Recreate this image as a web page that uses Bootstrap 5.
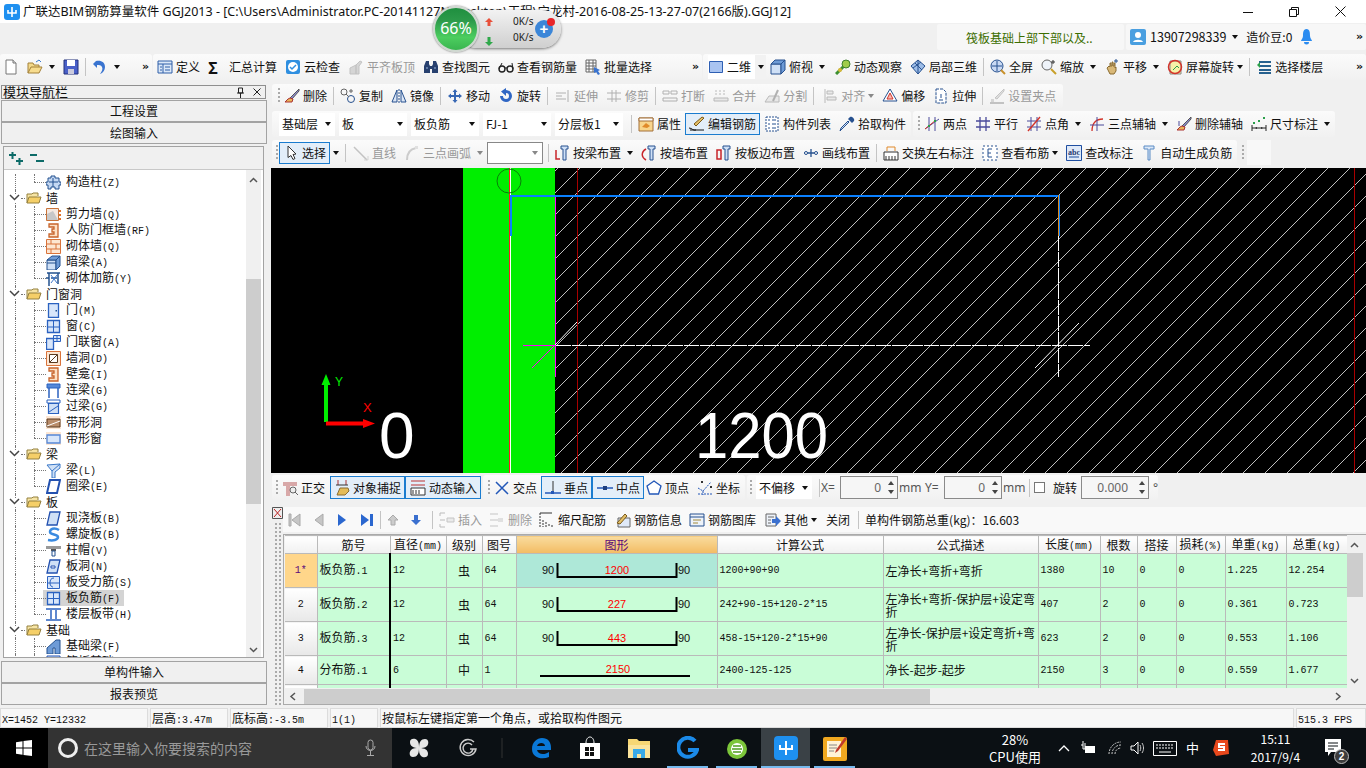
<!DOCTYPE html>
<html lang="zh-CN">
<head>
    <meta charset="UTF-8">
    <meta name="viewport" content="width=device-width, initial-scale=1.0">
    <title>GGJ2013</title>
    <link href="https://cdn.jsdelivr.net/npm/bootstrap@5.3.0/dist/css/bootstrap.min.css" rel="stylesheet">
    <style>
        body { width: 1366px; height: 768px; overflow: hidden; background: #f0f0f0; color: #111; font: 12px/16px "Noto Sans CJK SC", "Liberation Sans", sans-serif; }
        svg { flex: none; display: block; }
        .ltn { font: 10px/16px "Liberation Mono", monospace; }

        .title-bar { height: 23px; background: #fff; padding-left: 4px; }
        .title-text { font: 12.5px/23px "Noto Sans", "Noto Sans CJK SC", sans-serif; margin-left: 3px; white-space: nowrap; }
        .win-btns { margin-left: auto; gap: 36px; padding-right: 20px; }
        .top-band { height: 31px; padding-top: 1px; gap: 2px; justify-content: flex-end; }
        .notice { width: 187px; height: 26px; background: #f7f7f7; color: #3c6e00; padding-left: 29px; line-height: 28px; border-radius: 2px; }
        .user-box { width: 240px; height: 26px; background: #f7f7f7; padding-left: 4px; border-radius: 2px; }
        .phone { font-size: 12.5px; }

        .tbar { display: flex; align-items: center; white-space: nowrap; }
        .seg { height: 100%; display: flex; align-items: center; background: linear-gradient(#fbfbfb, #f1f1f1); border-radius: 3px; }
        .ti { display: inline-flex; align-items: center; gap: 3px; margin-right: 8px; height: 22px; flex: none; }
        .ti.off { color: #999; }
        .ti.off svg { filter: grayscale(1) opacity(.55); }
        .ti.on { background: #e3eef9; outline: 1px solid #1a7ccf; outline-offset: -1px; margin-right: 0; }
        .ti.w10 { margin-right: 10px; }
        .ti.w5 { margin-right: 5px; }
        .ti.l2 { margin-left: 2px; }
        .ic { width: 16px; height: 16px; }
        .car { display: inline-block; width: 0; height: 0; border: 3px solid transparent; border-top: 4px solid #111; border-bottom: 0; margin-left: 6px; flex: none; }
        .ti .car { margin-left: 3px; }
        .ti .car.tight { margin-left: 0; }
        .car.near { margin-left: 3px; }
        .car.dim { border-top-color: #888; }
        .vsep { width: 1px; height: 18px; background: #c4c4c4; margin: 0 6px; flex: none; }
        .vsep.x1 { margin-right: 7px; }
        .vsep.x2 { margin-right: 8px; }
        .vsep.nar { margin: 0 5px; }
        .grip { width: 2px; height: 16px; margin: 0 4px 0 5px; flex: none; background: repeating-linear-gradient(#aaa 0 2px, transparent 2px 4px); }
        .grip.near { margin: 0 1px 0 3px; }
        .grip.near2 { margin: 0 4px; }
        .grip.near3 { margin: 0 4px 0 3px; }
        .chev { font: bold 11px/12px "DejaVu Sans", sans-serif; letter-spacing: -2px; }
        .cmb { display: flex; align-items: center; justify-content: space-between; width: 68px; height: 23px; margin-right: 4px; padding: 0 4px 0 3px; background: #fff; flex: none; }
        .cmb.lay { width: 56px; }
        .cmb.box { width: 56px; height: 22px; border: 1px solid #888; justify-content: flex-end; margin: 0; }
        .cmb.offset { width: 56px; }

        .tb-1 { height: 26px; margin-bottom: 4px; gap: 1px; }
        .seg-a { width: 152px; padding-left: 3px; }
        .seg-b { width: 549px; padding-left: 4px; }
        .seg-c { flex: 1; padding-left: 5px; }
        .seg-end { margin-left: auto; padding-right: 5px; }
        .sq-cmb { background: #fff; height: 24px; padding-right: 4px; margin-right: 4px; }
        .sq-drop { display: flex; align-items: center; justify-content: center; width: 11px; height: 24px; background: #f2f2f2; margin-right: 4px; }
        .sq-drop .car { margin: 0; }

        .main { height: 622px; margin-bottom: 2px; }
        .aside { width: 267px; flex: none; }
        .dock-head { height: 14px; margin: 1px 1px 1px 1px; border: 1px solid #8f8f8f; line-height: 12px; font-size: 13px; padding-left: 1px; }
        .pane-btn { display: block; width: 266px; height: 22px; padding: 0; margin-left: 1px; font-size: 12px; line-height: 20px; border: 1px solid #a3a3a3; border-radius: 0; background: #f0f0f0; color: #111; }
        .tree-box { height: 512px; margin: 2px 3px 3px 3px; border: 1px solid #a3a3a3; background: #fff; }
        .tree-bar { height: 24px; background: #f0f0f0; border-bottom: 1px solid #c8c8c8; padding: 3px 0 0 3px; }
        .tree-list { flex: 1; min-width: 0; overflow: hidden; padding-top: 4px; }
        .tnode { position: relative; height: 16px; display: flex; align-items: center; white-space: nowrap; }
        .tnode::before { content: ""; position: absolute; left: 11px; top: 0; bottom: 0; border-left: 1px dotted #777; }
        .tgroup { padding-left: 5px; }
        .tgroup .ic { position: relative; }
        .tgroup .tarrow { position: relative; background: #fff; }
        .tgroup i { width: 4px; border-bottom: 1px dotted #777; margin: 0 1px; }
        .tgroup > span { margin-left: 4px; }
        .tchild { padding-left: 30px; }
        .tchild::after { content: ""; position: absolute; left: 30px; top: 0; bottom: 0; border-left: 1px dotted #777; }
        .tchild.tlast::after { bottom: 8px; }
        .tchild i { width: 12px; border-bottom: 1px dotted #777; }
        .tchild .ic { width: 15px; height: 15px; position: relative; z-index: 1; }
        .tchild > span { margin-left: 5px; padding-right: 1px; }
        .tnode.sel { background: linear-gradient(90deg, #fff 39px, #d4d4d4 39px, #d4d4d4 120px, #fff 120px); }
        .vscroll { width: 15px; flex: none; background: #f0f0f0; position: relative; }
        .vscroll .thumb { position: absolute; left: 0; right: 0; background: #cdcdcd; }
        .vscroll svg { position: absolute; left: 3px; }
        .tree-scroll { margin: 0 2px 0 0; }
        .tree-scroll .thumb { top: 109px; height: 225px; }
        .up-a { top: 7px; }
        .down-a { bottom: 4px; }

        .work { flex: 1; min-width: 0; padding-left: 4px; }
        .tb-2 { height: 24px; width: 791px; margin-left: 1px; }
        .tb-3 { height: 26px; margin-top: 3px; margin-left: 1px; gap: 2px; }
        .tb-4 { height: 25px; margin-top: 3px; margin-left: 1px; gap: 2px; }
        .seg-2 { width: 100%; padding-left: 1px; }
        .seg-3a { width: 639px; padding-left: 7px; flex: none; }
        .seg-3b { width: 422px; flex: none; }
        .seg-4a { width: 965px; padding-left: 1px; flex: none; }
        .blank-cell { width: 24px; background: #f8f8f8; height: 100%; margin-left: 0; }
        .canvas-area { height: 305px; margin-top: 3px; background: #000; }
        .tb-5 { height: 25px; margin-top: 2px; margin-left: 1px; gap: 2px; }
        .seg-5a { width: 209px; flex: none; }
        .seg-5b { width: 262px; flex: none; }
        .seg-5c { width: 411px; flex: none; }
        .ti.on.snap-on { padding: 0 4px; height: 23px; margin-right: 0; }
        .ti.on.snap-on + .snap-on { padding-left: 5px; }
        .spin { display: flex; align-items: center; justify-content: flex-end; width: 58px; height: 23px; border: 1px solid #8a8a8a; color: #666; font: 12px "Noto Sans", sans-serif; background: #f6f6f6; gap: 7px; padding-right: 3px; flex: none; }
        .spin.wide { width: 68px; }
        .spin b { display: flex; flex-direction: column; gap: 5px; }
        .car.up { border-top: 0; border-bottom: 4px solid #444; margin: 0; }
        .car.down { border-top-color: #444; margin: 0; }
        .gray-t { color: #555; font-family: "Noto Sans", sans-serif; flex: none; }
        .sep-x { margin: 0 1px 0 7px; }
        .lbl-x { margin-right: 3px; width: 16px; }
        .lbl-y { margin-right: 3px; width: 16px; }
        .lbl-m { margin: 0 5px 0 1px; width: 21px; }
        .sep-5 { margin: 0 2px 0 0; }
        .chk { width: 11px; height: 11px; border: 1px solid #777; background: #fff; flex: none; margin: 0 8px 0 2px; }
        .rot-l { margin-right: 4px; }

        .dock { height: 201px; margin-top: 5px; }
        .dock-strip { width: 12px; flex: none; padding: 2px 0 0 1px; }
        .dots { flex: 1; margin: 3px 2px 0; background-image: radial-gradient(#aaa 1px, transparent 1px); background-size: 4px 4px; }
        .dock-body { flex: 1; min-width: 0; }
        .tb-6 { height: 25px; margin-top: 2px; background: #f9f9f9; padding-left: 3px; }
        .tb-6 .ti { margin-right: 7px; }
        .tb-6 .ti.w9 { margin-right: 9px; }
        .tb-6 .ti.w0 { margin-right: 0; }
        .sep-a { margin: 0 4px 0 5px; }
        .sep-c { margin: 0 6px 0 8px; }
        .grid-frame { margin-top: 2px; height: 171px; border: 1px solid #aaa; border-right: 0; background: #f0f0f0; }
        .grid-wrap { height: 153px; overflow: hidden; flex: 1; min-width: 0; }
        .grid-scroll { margin-right: 3px; width: 16px; }
        .grid-scroll .thumb { top: 18px; height: 44px; }
        .rebar { width: 1062px; table-layout: fixed; margin: 0 0 0 1px; --bs-table-bg: #c9fdd7; --bs-table-border-color: #bababa; font-size: 12px; }
        .rebar > * > tr > * { padding: 0 2px; vertical-align: middle; border-width: 0 1px 1px 0; color: #111; }
        .rebar > thead > tr > th { height: 18px; font-weight: 400; text-align: center; background: linear-gradient(#fff, #f0f0f0); line-height: 14px; white-space: nowrap; padding: 0; }
        .rebar > thead > tr > th .ltn { line-height: 12px; }
        .rebar > thead > tr > th.pick { background: linear-gradient(#f9dc9e, #f3bb63); color: #5a0a7a; }
        .rebar > tbody > tr { height: 34px; }
        .rebar > tbody > tr.low { height: 29px; }
        .rebar > tbody > tr > th { background: linear-gradient(#fff, #e8e8e8); text-align: center; font: 10px "Liberation Mono", monospace; }
        .rebar > tbody > tr > th.cur { background: #ffd68a; color: #5a0a7a; }
        .rebar > tbody > tr > td.bar { border-right: 2px solid #000; }
        .rebar > tbody > tr > td.pic { padding: 0; }
        .rebar > tbody > tr > td.pic.cur { background: #aee8d8; }
        .rebar > tbody > tr > td.tight { line-height: 13px; white-space: nowrap; }
        .rebar td.ltn { font: 10px "Liberation Mono", monospace; }
        .rebar td.ctr { text-align: center; }
        .c0 { width: 32px; } .c1 { width: 73px; } .c2 { width: 56px; } .c3 { width: 36px; } .c4 { width: 34px; } .c5 { width: 201px; } .c6 { width: 166px; } .c7 { width: 155px; } .c8 { width: 62px; } .c9 { width: 37px; } .c10 { width: 39px; } .c11 { width: 49px; } .c12 { width: 61px; } .c13 { width: 61px; }
        .hscroll { height: 15px; margin-top: 1px; margin-left: 1px; position: relative; }
        .hscroll .thumb { position: absolute; left: 19px; top: 0; bottom: 0; width: 626px; background: #cdcdcd; }
        .hscroll svg { position: absolute; top: 3px; }

        .status-bar { height: 20px; gap: 2px; }
        .status-bar div { height: 20px; border: 1px solid #dcdcdc; background: #f7f7f7; line-height: 18px; padding-left: 1px; white-space: nowrap; flex: none; }
        .s1 { width: 148px; } .s2 { width: 78px; } .s3 { width: 98px; } .s4 { width: 48px; } .s5 { width: 914px; } .s6 { flex: 1 !important; }

        .task-bar { height: 40px; background: #0b1014; color: #fff; position: relative; }
        .start { width: 48px; height: 40px; background: #000; display: flex; align-items: center; justify-content: center; flex: none; }
        .search { width: 344px; height: 40px; background: #333; display: flex; align-items: center; padding-left: 10px; color: #999; font-size: 14px; margin-right: 2px; flex: none; }
        .search .ring { width: 20px; height: 20px; border: 3px solid #eee; border-radius: 50%; margin-right: 6px; flex: none; }
        .tslot { width: 49px; height: 40px; display: flex; align-items: center; justify-content: center; flex: none; position: relative; }
        .tslot.run::after { content: ""; position: absolute; left: 4px; right: 4px; bottom: 0; height: 2px; background: #76b9ed; }
        .tslot.act { background: #3a4146; }
        .tslot.act::after { left: 0; right: 0; }
        .tsep { width: 24px; height: 40px; display: flex; align-items: center; padding-left: 9px; flex: none; }
        .tray { margin-left: auto; display: flex; align-items: center; height: 40px; padding-right: 25px; }
        .tray-txt { text-align: center; line-height: 17px; font-size: 13px; flex: none; white-space: nowrap; }
        .tray-cpu { width: 52px; margin-right: 17px; }
        .tray-date { width: 53px; font-size: 12px; line-height: 18px; margin-right: 23px; }
        .mr-8 { margin-right: 8px; }
        .mr-9 { margin-right: 9px; }
        .mr-10 { margin-right: 10px; }
        .mr-12 { margin-right: 12px; }
        .mr-14 { margin-right: 14px; }
        .mr-20 { margin-right: 20px; }
        .tray-ime { font-size: 13px; }
        .tray-badge { right: -8px; bottom: -7px; width: 15px; height: 15px; background: #3d3d3d; border: 1px solid #bbb; font: 700 10px/13px "Liberation Sans", sans-serif; }

        .net-wid { position: absolute; left: 433px; top: 6px; width: 128px; height: 46px; }
        .net-pill { position: absolute; left: 24px; top: 4px; right: 0; height: 38px; border-radius: 19px; background: linear-gradient(#f2f2f2, #cfcfcf); box-shadow: 0 1px 3px #777; }
        .net-ball { position: absolute; left: 0; top: 0; width: 46px; height: 46px; border-radius: 50%; background: linear-gradient(#1f8f3f 0, #2c9a4a 30%, #4ccd5f 70%, #39b54f 100%); border: 2px solid #cfd8d0; box-shadow: 0 0 2px #555; color: #fff; text-align: center; font: 16px/40px "Noto Sans", sans-serif; }
        .net-arrows { position: absolute; left: 52px; top: 12px; }
        .net-rate { position: absolute; left: 80px; font: 10px/12px "Noto Sans", sans-serif; color: #222; }
        .rate-up { top: 9px; }
        .rate-down { top: 25px; }
        .net-plus { position: absolute; left: 102px; top: 14px; width: 18px; height: 18px; border-radius: 50%; background: #3b86d8; color: #fff; text-align: center; font: bold 15px/17px "Liberation Sans", sans-serif; }
        .net-dot { position: absolute; left: 114px; top: 12px; width: 8px; height: 8px; border-radius: 50%; background: #e8262a; }
    </style>
</head>
<body class="d-flex flex-column position-relative">

<svg width="0" height="0" class="position-absolute">
    <defs>
        <!-- toolbar icons -->
        <symbol id="new" viewBox="0 0 16 16"><path d="M3 1h7l3 3v11H3z" fill="#fff" stroke="#777"/><path d="M10 1v3h3" fill="#ddd" stroke="#777"/></symbol>
        <symbol id="open" viewBox="0 0 16 16"><path d="M1 14V4h5l1 2h5v2" fill="#f3d98b" stroke="#a3813a"/><path d="M1 14l3-6h11l-3 6z" fill="#f7dc8e" stroke="#a3813a"/><path d="M9 3l3-2 2 2" fill="none" stroke="#3a7bd0"/></symbol>
        <symbol id="save" viewBox="0 0 16 16"><path d="M1 1h14v14H1z" fill="#4a60c8" stroke="#23307a"/><path d="M4 1h8v6H4z" fill="#fff"/><path d="M5 10h6v5H5z" fill="#ccd"/></symbol>
        <symbol id="undo" viewBox="0 0 16 16"><path d="M4 2c5-1 9 1 9 6 0 3-2 6-5 7 2-3 3-5 2-7-1-2-3-2-5-2v3L1 5z" fill="#3a74d0"/></symbol>
        <symbol id="def" viewBox="0 0 16 16"><path d="M1 2h14v12H1z" fill="#dbe8f8" stroke="#2f5fa8"/><path d="M1 5h14M6 5v9M3 8h2M3 11h2M8 8h5M8 11h5" stroke="#2f5fa8" fill="none"/></symbol>
        <symbol id="cloud" viewBox="0 0 16 16"><rect x="1" y="1" width="14" height="14" rx="2" fill="#2f8fe0"/><circle cx="8" cy="8" r="5" fill="#fff"/><path d="M5 8l2 2 4-4" fill="none" stroke="#2f8fe0" stroke-width="1.5"/></symbol>
        <symbol id="flat" viewBox="0 0 16 16"><path d="M2 15V9l6-3v9zM8 15V6l4-4 2 1-3 4v8z" fill="#bbb" stroke="#999"/></symbol>
        <symbol id="find" viewBox="0 0 16 16"><path d="M3 2h3v3l1 2v7H1V7zM10 2h3l2 5v7H9V7l1-2z" fill="#27406f"/><path d="M7 7h2v3H7z" fill="#27406f"/><path d="M3 9h2M11 9h2" stroke="#9cb6dd"/></symbol>
        <symbol id="glass" viewBox="0 0 16 16"><circle cx="4" cy="10" r="3" fill="none" stroke="#222" stroke-width="1.4"/><circle cx="12" cy="10" r="3" fill="none" stroke="#222" stroke-width="1.4"/><path d="M7 9h2M1 10l3-6M15 10l-1-6" stroke="#222" fill="none"/></symbol>
        <symbol id="batch" viewBox="0 0 16 16"><path d="M1 1h10v12H1zM1 4h10M1 7h10M1 10h10M4 1v12M8 1v12" fill="#fff" stroke="#666"/><path d="M9 8l6 3-2 1 2 3-2 1-2-3-2 1z" fill="#3a74d0"/></symbol>
        <symbol id="twod" viewBox="0 0 16 16"><path d="M1.500 2.500h13v11h-13z" fill="#a9c4f1" stroke="#2e5fb3"/></symbol>
        <symbol id="cube" viewBox="0 0 16 16"><path d="M1 5h10v10H1z" fill="#cfe0f6" stroke="#27518f"/><path d="M1 5l4-4h10l-4 4zM11 5l4-4v10l-4 4z" fill="#6e9bd6" stroke="#27518f"/></symbol>
        <symbol id="orbit" viewBox="0 0 16 16"><path d="M1 15L13 3" stroke="#3c8f2e" stroke-width="3"/><circle cx="11" cy="5" r="4" fill="#9fcc4a" stroke="#3c7f2e"/><circle cx="5" cy="11" r="2" fill="#d8b93a"/></symbol>
        <symbol id="local3" viewBox="0 0 16 16"><path d="M8 1l7 6-7 8-7-8z" fill="#9dbde8" stroke="#27518f"/><path d="M5 4l7 7M8 1v14M3 9l8-6" stroke="#27518f" fill="none"/></symbol>
        <symbol id="full" viewBox="0 0 16 16"><circle cx="7" cy="7" r="6" fill="#c9d9f3" stroke="#27518f"/><path d="M7 2v10M2 7h10" stroke="#27518f"/><path d="M11 11l4 4" stroke="#c8902a" stroke-width="2"/></symbol>
        <symbol id="zoom" viewBox="0 0 16 16"><circle cx="6" cy="6" r="5" fill="#eef3fa" stroke="#666"/><path d="M10 10l5 5" stroke="#c8a02a" stroke-width="2"/><path d="M12 1v4M14 3h-4" stroke="#333"/></symbol>
        <symbol id="pan" viewBox="0 0 16 16"><path d="M3 9l2-2 1 1V4h1v3h1V3h1v4h1V4h1v5l1-1v4l-2 3H6z" fill="#d9b877" stroke="#8a6d33"/><path d="M12 0v4M10 2h4" stroke="#27518f"/></symbol>
        <symbol id="srot" viewBox="0 0 16 16"><path d="M3 2h11v13H3z" fill="#f7f1a8" stroke="#888"/><circle cx="8" cy="8" r="6.500" fill="none" stroke="#d2332a" stroke-width="1.500"/><path d="M6 11l4-4 2 2" stroke="#2a9f4a" fill="none"/></symbol>
        <symbol id="floors" viewBox="0 0 16 16"><path d="M3 3h12M3 7h12M3 11h12M3 14h12" stroke="#27618f" stroke-width="2"/><path d="M1 6l3-3v6z" fill="#2a9f4a"/></symbol>
        <symbol id="erase" viewBox="0 0 16 16"><path d="M15 1L6 10l2 1 7-8z" fill="#8a8ad0" stroke="#555"/><path d="M6 10l-2 1-3 3h7l1-3z" fill="#e9b458" stroke="#a33"/></symbol>
        <symbol id="copy" viewBox="0 0 16 16"><circle cx="4" cy="4" r="3" fill="none" stroke="#666"/><circle cx="11" cy="11" r="3.500" fill="none" stroke="#27518f"/><path d="M6 6l3 3M11 1v4M13 3H9" stroke="#666"/></symbol>
        <symbol id="mirror" viewBox="0 0 16 16"><path d="M6 2v12H1zM10 2v12h5z" fill="#dbe6f6" stroke="#27518f"/><path d="M8 1v14" stroke="#27518f" stroke-dasharray="2 1"/></symbol>
        <symbol id="move" viewBox="0 0 16 16"><path d="M8 1l2.500 3H9v3h3V5.500l3 2.500-3 2.500V9H9v3h1.500L8 15l-2.500-3H7V9H4v1.500L1 8l3-2.500V7h3V4H5.500z" fill="#3868b4"/></symbol>
        <symbol id="rot" viewBox="0 0 16 16"><path d="M8 2a6 6 0 1 1-6 6h3a3 3 0 1 0 3-3v3L3 3.500 8 0z" fill="#2f66c4"/></symbol>
        <symbol id="extd" viewBox="0 0 16 16"><path d="M1 5h10M1 11h10M1 8h6M13 2v12" stroke="#777" fill="none"/></symbol>
        <symbol id="trim" viewBox="0 0 16 16"><path d="M6 2v12M10 2v12M1 5h14M1 11h14" stroke="#777" fill="none"/></symbol>
        <symbol id="brk" viewBox="0 0 16 16"><path d="M1 3h6v3H1zM9 3h6v3H9zM1 10h14v3H1z" fill="none" stroke="#777"/></symbol>
        <symbol id="merge" viewBox="0 0 16 16"><path d="M1 10h14v3H1z" fill="#ddd" stroke="#888"/><path d="M3 2v6M7 2v6M11 2v6" stroke="#888" stroke-dasharray="2 1"/></symbol>
        <symbol id="split" viewBox="0 0 16 16"><path d="M1 14l4-6h10v6z" fill="#ddd" stroke="#888"/><path d="M9 13l5-11" stroke="#777" stroke-width="2"/></symbol>
        <symbol id="align" viewBox="0 0 16 16"><path d="M3 1v14M5 3h6v3H5zM5 9h9v3H5z" fill="#ddd" stroke="#888"/></symbol>
        <symbol id="off" viewBox="0 0 16 16"><path d="M8 1l7 12H1z" fill="#fff" stroke="#27518f"/><path d="M8 5l3 6H5z" fill="#f6b9b0" stroke="#d2332a"/></symbol>
        <symbol id="strch" viewBox="0 0 16 16"><path d="M3 1h7l3 3v11H3z" fill="#fff" stroke="#27518f" stroke-dasharray="3 1"/><path d="M6 12h4M8 6v4" stroke="#27518f"/></symbol>
        <symbol id="grip" viewBox="0 0 16 16"><path d="M15 1L6 10l2 1 7-8z" fill="#ccc" stroke="#999"/><path d="M1 15h14" stroke="#999" stroke-width="2"/><path d="M2 11h3v3H2z" fill="#bbb"/></symbol>
        <symbol id="attr" viewBox="0 0 16 16"><path d="M1 2h14v13H1z" fill="#f8d58c" stroke="#a3713a"/><path d="M1 2h14v3H1z" fill="#fff" stroke="#a3713a"/><path d="M4 11l4-4 4 3-3 2z" fill="#e08a2a"/></symbol>
        <symbol id="edit" viewBox="0 0 16 16"><path d="M15 2l-8 8-2-2 8-7z" fill="#e4c069" stroke="#7a5a1a"/><path d="M0 12c3 0 4 3 7 2M1 14h14" stroke="#111" fill="none"/></symbol>
        <symbol id="list" viewBox="0 0 16 16"><path d="M2 1h12v14H2z" fill="#fff" stroke="#27518f" stroke-dasharray="2 1"/><path d="M4 4h2M4 8h2M4 12h2M8 4h4M8 8h4M8 12h4" stroke="#27518f"/></symbol>
        <symbol id="pick" viewBox="0 0 16 16"><path d="M10 6l-7 7-2 2 1-3 7-7z" fill="#cfe0f6" stroke="#27518f"/><path d="M9 3l4 4 2-2c1-2-2-5-4-4z" fill="#27518f"/></symbol>
        <symbol id="twop" viewBox="0 0 16 16"><path d="M1 13L15 3M5 1v14M11 1v14" stroke="#4a4a9a" fill="none"/><path d="M1 13L12 4" stroke="#d2332a"/><rect x="4" y="9" width="2" height="2" fill="#2a9f4a"/><rect x="10" y="4" width="2" height="2" fill="#2a9f4a"/></symbol>
        <symbol id="para" viewBox="0 0 16 16"><path d="M5 1v14M11 1v14M1 5h14M1 11h14" stroke="#4a4a9a" stroke-width="1.300"/></symbol>
        <symbol id="angl" viewBox="0 0 16 16"><path d="M5 1v14M11 1v14M1 5h14M1 11h14" stroke="#4a4a9a"/><path d="M2 15L14 1" stroke="#d2332a" stroke-width="1.400"/></symbol>
        <symbol id="arc3" viewBox="0 0 16 16"><path d="M3 15C3 7 7 3 14 3" stroke="#d2332a" fill="none" stroke-width="1.300"/><path d="M8 1v14M1 9h14" stroke="#4a4a9a"/></symbol>
        <symbol id="delx" viewBox="0 0 16 16"><path d="M15 1L6 10l2 1 7-8z" fill="#8a8ad0" stroke="#555"/><path d="M6 10l-2 1-3 3h7l1-3z" fill="#e9b458" stroke="#a33"/><path d="M3 5v5" stroke="#4a4a9a"/></symbol>
        <symbol id="dim" viewBox="0 0 16 16"><path d="M1 9v6M15 9v6M1 12h14" stroke="#222"/><path d="M2 6h2v2H2zM12 1h2v2h-2zM7 4h2v2H7z" fill="#2a9f4a"/><path d="M4 12l2-1v2zM12 12l-2-1v2z" fill="#222"/></symbol>
        <symbol id="cursor" viewBox="0 0 16 16"><path d="M5 1l8 8-3 .5 2 4-2 1-2-4-3 2z" fill="#fff" stroke="#333"/></symbol>
        <symbol id="line" viewBox="0 0 16 16"><path d="M1 2l13 13" stroke="#999" stroke-width="1.500"/><path d="M11 15h4v-4" stroke="#bbb" fill="none"/></symbol>
        <symbol id="arc" viewBox="0 0 16 16"><path d="M3 15C3 8 6 4 12 3" stroke="#aaa" fill="none" stroke-width="2"/><rect x="11" y="1" width="3" height="3" fill="#ccc"/></symbol>
        <symbol id="blay" viewBox="0 0 16 16"><path d="M7 1h7v3h-2v11H9V4H7z" fill="#cfe0f6" stroke="#27518f"/><path d="M2 5v9h4" stroke="#c8242a" fill="none" stroke-width="1.500"/></symbol>
        <symbol id="wlay" viewBox="0 0 16 16"><path d="M7 1h7v3h-2v11H9V4H7z" fill="#cfe0f6" stroke="#27518f"/><path d="M5 4C0 7 0 12 5 15" stroke="#c8242a" fill="none" stroke-width="1.500"/></symbol>
        <symbol id="elay" viewBox="0 0 16 16"><path d="M7 1h7v3h-2v11H9V4H7z" fill="#cfe0f6" stroke="#27518f"/><path d="M1 5h4v9H1z" fill="none" stroke="#c8242a" stroke-width="1.500"/></symbol>
        <symbol id="llay" viewBox="0 0 16 16"><path d="M1 8h14M8 4v8" stroke="#27518f" stroke-width="1.300"/><circle cx="3" cy="8" r="1.500" fill="#fff" stroke="#27518f"/><circle cx="13" cy="8" r="1.500" fill="#fff" stroke="#27518f"/></symbol>
        <symbol id="swap" viewBox="0 0 16 16"><path d="M1 7h14v8H1z" fill="#fff" stroke="#333"/><path d="M3 11v4M6 11v4M9 11v4M12 11v4" stroke="#333"/><path d="M4 2v4M12 2v4M4 2h8" stroke="#e0892a"/></symbol>
        <symbol id="view" viewBox="0 0 16 16"><path d="M1 1h14v14H1z" fill="#fff" stroke="#27518f" stroke-dasharray="2 2"/><path d="M10 4H6v8h4M6 8h3" stroke="#27518f" fill="none"/></symbol>
        <symbol id="abc" viewBox="0 0 16 16"><path d="M.500.500h15v15h-15z" fill="#dfe9f8" stroke="#1f4ea0"/><path d="M3 12h10" stroke="#1f4ea0"/><text x="8" y="10" font-size="8" font-weight="700" text-anchor="middle" fill="#1f3a70" font-family="Liberation Serif">abc</text></symbol>
        <symbol id="auto" viewBox="0 0 16 16"><path d="M3 1h10v3H9v11H7V4H3z" fill="#dbe8f8" stroke="#5a8bc4"/></symbol>
        <symbol id="orth" viewBox="0 0 16 16"><path d="M1 2h14v4H1zM4 6h4v10H4z" fill="#d8a8a8"/><circle cx="11" cy="10" r="3" fill="#eee" stroke="#666"/><path d="M13 12l3 3" stroke="#666"/></symbol>
        <symbol id="snap" viewBox="0 0 16 16"><path d="M4 0v5M12 0v5" stroke="#a33"/><path d="M2 5h12" stroke="#333"/><path d="M3 15l3-7h8l1 3-4 4z" fill="#e5bc58" stroke="#8a6d33"/></symbol>
        <symbol id="dyn" viewBox="0 0 16 16"><path d="M1 1h14M1 5h14" stroke="#b33"/><path d="M1 8h14v7H1z" fill="#fff" stroke="#333"/><path d="M3 14V10M6 14V10M9 14V10" stroke="#333"/></symbol>
        <symbol id="cross" viewBox="0 0 16 16"><path d="M2 2l12 12M14 2L2 14" stroke="#2257b8" stroke-width="1.500"/></symbol>
        <symbol id="perp" viewBox="0 0 16 16"><path d="M0 13h16" stroke="#2257b8" stroke-width="1.500"/><path d="M8 1v12" stroke="#333"/><rect x="6" y="11" width="3" height="3" fill="#2257b8"/></symbol>
        <symbol id="mid" viewBox="0 0 16 16"><path d="M0 8h16" stroke="#2257b8" stroke-width="1.500"/><rect x="6" y="6" width="4" height="4" fill="#1d3f80"/></symbol>
        <symbol id="vtx" viewBox="0 0 16 16"><path d="M8 1l7 5-2.500 8h-9L1 6z" fill="#fff" stroke="#2257b8" stroke-width="1.300"/></symbol>
        <symbol id="coord" viewBox="0 0 16 16"><path d="M1 8l5 3 8-9M6 11v4M1 14h14" stroke="#2257b8" fill="none" stroke-dasharray="2 1"/><rect x="4" y="1" width="2" height="2" fill="#333"/><rect x="13" y="6" width="2" height="2" fill="#333"/></symbol>
        <symbol id="first" viewBox="0 0 16 16"><path d="M3 2h2v12H3zM14 2v12L6 8z" fill="#c6c6c6" stroke="#aaa"/></symbol>
        <symbol id="prev" viewBox="0 0 16 16"><path d="M12 2v12L4 8z" fill="#c6c6c6" stroke="#aaa"/></symbol>
        <symbol id="next" viewBox="0 0 16 16"><path d="M4 2v12l8-6z" fill="#2b67cf"/></symbol>
        <symbol id="last" viewBox="0 0 16 16"><path d="M2 2v12l8-6zM11 2h3v12h-3z" fill="#2b67cf"/></symbol>
        <symbol id="upb" viewBox="0 0 16 16"><path d="M8 3l5 5h-3v5H6V8H3z" fill="#ccc" stroke="#aaa"/></symbol>
        <symbol id="dnb" viewBox="0 0 16 16"><path d="M8 13l5-5h-3V3H6v5H3z" fill="#3b70cf"/></symbol>
        <symbol id="ins" viewBox="0 0 16 16"><path d="M1 1h5M1 8h5M1 15h5M1 1v3M1 12v3" stroke="#888" fill="none"/><path d="M8 6h7v4H8z" fill="#ddd" stroke="#999"/></symbol>
        <symbol id="dele" viewBox="0 0 16 16"><path d="M1 2h8M1 8h8M1 14h8" stroke="#999" fill="none"/><path d="M9 6h5v4H9z" fill="#ccc"/></symbol>
        <symbol id="scale" viewBox="0 0 16 16"><path d="M1 1v14M4 8v7M7 10v5M10 12v3M13 13v2" stroke="#333" stroke-dasharray="2 1"/><path d="M1 1h12" stroke="#333"/></symbol>
        <symbol id="info" viewBox="0 0 16 16"><path d="M3 6h12v9H3z" fill="#dfe9f8" stroke="#666"/><path d="M2 11l8-9 2 2-7 8z" fill="#e4c069" stroke="#7a5a1a"/></symbol>
        <symbol id="lib" viewBox="0 0 16 16"><path d="M1 2h14v12H1z" fill="#eef3fa" stroke="#27518f"/><path d="M1 5h14" stroke="#27518f"/><path d="M4 8h8M4 11h5" stroke="#a38a3a"/></symbol>
        <symbol id="other" viewBox="0 0 16 16"><path d="M1 2h10v12H1z" fill="#eef3fa" stroke="#666"/><path d="M3 5h6M3 8h3M3 11h3" stroke="#666"/><path d="M7 7h4V4l5 5-5 5v-3H7z" fill="#3b70cf"/></symbol>
        <symbol id="panel-x" viewBox="0 0 11 12"><path d="M.500.500h10v11H.500z" fill="#eee" stroke="#555"/><path d="M2 2l7 8M9 2l-7 8" stroke="#b22"/></symbol>
        <symbol id="folder" viewBox="0 0 16 16"><path d="M1 13V4h5l1-1h5v3" fill="#f6e4a4" stroke="#94803f"/><path d="M1 13l2-6h12l-2 6z" fill="#f5cf68" stroke="#94803f"/></symbol>
        <!-- tree icons -->
        <symbol id="t-col" viewBox="0 0 15 15"><path d="M5 1h4v2h4v4h2v3h-2v4H9v-2H5v2H2v-4H0V7h2V3h3z" fill="#c4d8f3" stroke="#23518f"/><path d="M7 3v9M3 7h9" stroke="#23518f"/></symbol>
        <symbol id="t-shear" viewBox="0 0 15 15"><path d="M.500 1.500h12v12h-12z" fill="#f4e8e0" stroke="#c8733a"/><path d="M1 7l6-3 5 9H1z" fill="#c7c7c7"/><path d="M14 3v2M14 7v2M14 11v2" stroke="#e0722a" stroke-width="2"/></symbol>
        <symbol id="t-frame" viewBox="0 0 15 15"><path d="M3 1h9v13H3v-3h5V9H6V6h2V4H3z" fill="#fde0c5" stroke="#c8632a" stroke-width="1.300"/></symbol>
        <symbol id="t-brick" viewBox="0 0 15 15"><path d="M.500.500h14v14H.500z" fill="#fde6d2" stroke="#d9733a"/><path d="M0 5h15M0 10h15M5 0v5M10 5v5M5 10v5" stroke="#d9733a"/></symbol>
        <symbol id="t-hbeam" viewBox="0 0 15 15"><path d="M1 5h9v10H1z" fill="#cfe0f6" stroke="#23518f"/><path d="M1 5l5-4h8l-4 4zM10 5l4-4v10l-4 4z" fill="#6e9bd6" stroke="#23518f"/><path d="M1 8h9" stroke="#23518f"/></symbol>
        <symbol id="t-mrebar" viewBox="0 0 15 15"><path d="M1 2h13M3 2v13M12 2v11M5 7h6M0 7h3" stroke="#23518f" stroke-width="1.500" fill="none"/><path d="M5 4l6 8M11 4l-6 8" stroke="#3f77cc"/></symbol>
        <symbol id="t-door" viewBox="0 0 15 15"><path d="M2.500.500h10v14h-10z" fill="#d8e6fa" stroke="#2b62c0" stroke-width="1.300"/><rect x="9.500" y="7" width="1.500" height="1.500" fill="#23518f"/></symbol>
        <symbol id="t-win" viewBox="0 0 15 15"><path d="M1.500 1.500h12v12h-12z" fill="#d8e6fa" stroke="#2b62c0" stroke-width="1.300"/><path d="M7.500 1v13M1 8h13" stroke="#2b62c0"/></symbol>
        <symbol id="t-dw" viewBox="0 0 15 15"><path d="M.500 3.500h7v11h-7z" fill="#d8e6fa" stroke="#2b62c0" stroke-width="1.300"/><path d="M7.500 .500h7v6h-7zM11 1v6M8 3.500h6" fill="#d8e6fa" stroke="#2b62c0"/></symbol>
        <symbol id="t-whole" viewBox="0 0 15 15"><path d="M.500.500h14v14H.500z" fill="#fde6d2" stroke="#d9733a"/><path d="M3.500 3.500h8v8h-8z" fill="#fff" stroke="#5b3a20"/><path d="M3.500 11.500l8-8" stroke="#5b3a20"/></symbol>
        <symbol id="t-link" viewBox="0 0 15 15"><path d="M1 1h13v4H1z" fill="#5588d8" stroke="#2b62c0"/><path d="M3 5v10M12 5v10" stroke="#2b62c0" stroke-width="1.500"/></symbol>
        <symbol id="t-lint" viewBox="0 0 15 15"><path d="M1 1h13v3H1z" fill="#fff" stroke="#2b62c0"/><path d="M2.500 4.500h10v10h-10z" fill="#cfe0f6" stroke="#2b62c0" stroke-width="1.200"/><path d="M3 13l9-6" stroke="#2b62c0"/></symbol>
        <symbol id="t-bhole" viewBox="0 0 15 15"><path d="M0 1h15v13H0z" fill="#fde6d2"/><path d="M1 4h13v8H1z" fill="#b98d6b" stroke="#5b3a20"/><path d="M1 11l13-5" stroke="#fff"/></symbol>
        <symbol id="t-bwin" viewBox="0 0 15 15"><path d="M0 1h15v13H0z" fill="#fde6d2"/><path d="M1 4h13v8H1z" fill="#d8e6fa" stroke="#5588d8" stroke-width="1.300"/></symbol>
        <symbol id="t-beam" viewBox="0 0 15 15"><path d="M1 2l13-1v4L9 9v6H6V8z" fill="#cfe0f6" stroke="#3a78c8"/><path d="M6 8l8-7" stroke="#3a78c8"/></symbol>
        <symbol id="t-ring" viewBox="0 0 15 15"><path d="M4 1h10l-3 13H1z" fill="#fff" stroke="#2351b0" stroke-width="2"/></symbol>
        <symbol id="t-slab" viewBox="0 0 15 15"><path d="M4 1h10l-3 13H1z" fill="#cfe0f6" stroke="#2351b0" stroke-width="1.300"/></symbol>
        <symbol id="t-spiral" viewBox="0 0 15 15"><path d="M13 3C8 0 4 2 4 5s8 2 8 5-5 4-10 3" fill="none" stroke="#3a8ae0" stroke-width="2.500"/></symbol>
        <symbol id="t-cap" viewBox="0 0 15 15"><path d="M0 3h15v3H0z" fill="#999"/><path d="M5 6h5v2H5z" fill="#555"/><path d="M6 8h3v5H6z" fill="#fff" stroke="#23518f"/></symbol>
        <symbol id="t-shole" viewBox="0 0 15 15"><path d="M4 1h10l-3 13H1z" fill="#cfe0f6" stroke="#2351b0" stroke-width="1.300"/><path d="M5 7h4v2H5z" fill="#fff" stroke="#2351b0"/></symbol>
        <symbol id="t-srebar" viewBox="0 0 15 15"><path d="M1.500 1.500h12v12h-12z" fill="#d8e6fa" stroke="#2b62c0"/><path d="M1 8h13M8 3C5 3 4 5 4 8s2 4 3 4" stroke="#2b62c0" fill="none"/></symbol>
        <symbol id="t-neg" viewBox="0 0 15 15"><path d="M1.500 1.500h12v12h-12z" fill="#d8e6fa" stroke="#2b62c0" stroke-width="1.300"/><path d="M7.500 2v11M2 7.500h11" stroke="#2b62c0"/></symbol>
        <symbol id="t-band" viewBox="0 0 15 15"><path d="M0 2h15M0 13h15M5 3v9M10 3v9" stroke="#2b62c0" stroke-width="1.500"/></symbol>
        <symbol id="t-fbeam" viewBox="0 0 15 15"><path d="M1 15V9l9-8h4v14H9V9H7v6z" fill="#6e9bd6" stroke="#23518f"/></symbol>
        <symbol id="t-raft" viewBox="0 0 15 15"><path d="M1 1h13v13H1z" fill="#cfe0f6" stroke="#2351b0"/></symbol>
        <pattern id="hatch" width="22" height="22" patternUnits="userSpaceOnUse"><path d="M-1 23L23-1" stroke="#bdbdbd" shape-rendering="crispEdges"/></pattern>
    </defs>
</svg>

<!-- title bar -->
<header class="title-bar d-flex align-items-center">
    <svg width="16" height="16" viewBox="0 0 16 16"><rect width="16" height="16" rx="3" fill="#1e90f0"/><path d="M8 3v10M4 6v3h8V6" stroke="#fff" stroke-width="1.600" fill="none"/></svg>
    <span class="title-text">广联达BIM钢筋算量软件 GGJ2013 - [C:\Users\Administrator.PC-20141127N\Desktop\工程\宁龙村-2016-08-25-13-27-07(2166版).GGJ12]</span>
    <div class="win-btns d-flex align-items-center">
        <svg width="10" height="10" viewBox="0 0 10 10"><path d="M0 5.500h10" stroke="#111"/></svg>
        <svg width="10" height="10" viewBox="0 0 10 10"><path d="M.500 2.500h7v7h-7zM2.500 2.500v-2h7v7h-2" fill="none" stroke="#111"/></svg>
        <svg width="11" height="11" viewBox="0 0 11 11"><path d="M.500.500l10 10M10.500.500l-10 10" stroke="#111"/></svg>
    </div>
</header>

<!-- ribbon band with news and user -->
<div class="top-band d-flex">
    <div class="notice">筏板基础上部下部以及..</div>
    <div class="user-box d-flex align-items-center">
        <svg width="16" height="18" viewBox="0 0 16 18"><rect y="1" width="16" height="16" rx="2" fill="#4a9fe0"/><circle cx="8" cy="7" r="3" fill="#fff"/><path d="M3 14c1-3 9-3 10 0z" fill="#fff"/></svg>
        <span class="ms-1 phone">13907298339</span><b class="car"></b>
        <span class="ms-2">造价豆:0</span>
        <svg class="ms-2" width="13" height="18" viewBox="0 0 13 18"><path d="M6.500 1C3 1 3 5 3 8c0 2-2 4-2 5h11c0-1-2-3-2-5 0-3 0-7-3.500-7z" fill="#2c8cf0"/><path d="M4 14a2.500 2.500 0 0 0 5 0z" fill="#2c8cf0"/></svg>
        <span class="chev seg-end">»</span>
    </div>
</div>

<!-- main toolbar -->
<div class="tbar tb-1">
    <div class="seg seg-a">
        <svg class="ic me-2"><use href="#new"/></svg>
        <svg class="ic"><use href="#open"/></svg><b class="car me-2"></b>
        <svg class="ic"><use href="#save"/></svg>
        <span class="vsep"></span>
        <svg class="ic"><use href="#undo"/></svg><b class="car"></b>
        <span class="chev seg-end">»</span>
    </div>
    <div class="seg seg-b">
        <span class="ti"><svg class="ic"><use href="#def"/></svg>定义</span>
        <span class="ti"><b class="fs-6 me-1">Σ</b><span class="ms-1">汇总计算</span></span>
        <span class="ti"><svg class="ic"><use href="#cloud"/></svg>云检查</span>
        <span class="ti off"><svg class="ic"><use href="#flat"/></svg>平齐板顶</span>
        <span class="ti"><svg class="ic"><use href="#find"/></svg>查找图元</span>
        <span class="ti"><svg class="ic"><use href="#glass"/></svg>查看钢筋量</span>
        <span class="ti"><svg class="ic"><use href="#batch"/></svg>批量选择</span>
        <span class="chev seg-end">»</span>
    </div>
    <div class="seg seg-c">
        <span class="ti sq-cmb m-0"><svg class="ic"><use href="#twod"/></svg>二维</span><span class="sq-drop"><b class="car"></b></span>
        <span class="ti w10"><svg class="ic"><use href="#cube"/></svg>俯视<b class="car"></b></span>
        <span class="ti"><svg class="ic"><use href="#orbit"/></svg>动态观察</span>
        <span class="ti m-0"><svg class="ic"><use href="#local3"/></svg>局部三维</span>
        <span class="vsep"></span>
        <span class="ti"><svg class="ic"><use href="#full"/></svg>全屏</span>
        <span class="ti"><svg class="ic"><use href="#zoom"/></svg>缩放<b class="car"></b></span>
        <span class="ti"><svg class="ic"><use href="#pan"/></svg>平移<b class="car"></b></span>
        <span class="ti m-0"><svg class="ic"><use href="#srot"/></svg>屏幕旋转<b class="car tight"></b></span>
        <span class="vsep"></span>
        <span class="ti"><svg class="ic"><use href="#floors"/></svg>选择楼层</span>
        <span class="chev seg-end">»</span>
    </div>
</div>

<div class="main d-flex">
    <!-- module navigator -->
    <aside class="aside d-flex flex-column">
        <div class="dock-head d-flex align-items-center">
            <span>模块导航栏</span>
            <svg class="ms-auto me-2" width="9" height="11" viewBox="0 0 9 11"><path d="M2.500 1h4v5h-4zM1 6h7M4.500 6v5" fill="none" stroke="#222"/></svg>
            <svg class="me-1" width="8" height="8" viewBox="0 0 8 8"><path d="M.500.500l7 7M7.500.500l-7 7" stroke="#222"/></svg>
        </div>
        <button class="btn pane-btn">工程设置</button>
        <button class="btn pane-btn">绘图输入</button>
        <div class="tree-box d-flex flex-column">
            <div class="tree-bar d-flex gap-1">
                <svg width="18" height="16" viewBox="0 0 18 16"><path d="M2 5h7M5.500 2v7M9 11h7M12.500 8v7" stroke="#0d6b68" stroke-width="2"/></svg>
                <svg width="16" height="16" viewBox="0 0 16 16"><path d="M1 5h7M7 11h8" stroke="#0d6b68" stroke-width="2"/></svg>
            </div>
            <div class="d-flex flex-grow-1 overflow-hidden">
                <div class="tree-list">
                    <div class="tnode tchild tlast"><i></i><svg class="ic"><use href="#t-col"/></svg><span>构造柱<span class="ltn">(Z)</span></span></div>
                    <div class="tnode tgroup"><svg class="tarrow" width="11" height="8" viewBox="0 0 11 8"><path d="M1 1l4.500 4.500L10 1" fill="none" stroke="#444" stroke-width="1.500"/></svg><i></i><svg class="ic"><use href="#folder"/></svg><span>墙</span></div>
                    <div class="tnode tchild"><i></i><svg class="ic"><use href="#t-shear"/></svg><span>剪力墙<span class="ltn">(Q)</span></span></div>
                    <div class="tnode tchild"><i></i><svg class="ic"><use href="#t-frame"/></svg><span>人防门框墙<span class="ltn">(RF)</span></span></div>
                    <div class="tnode tchild"><i></i><svg class="ic"><use href="#t-brick"/></svg><span>砌体墙<span class="ltn">(Q)</span></span></div>
                    <div class="tnode tchild"><i></i><svg class="ic"><use href="#t-hbeam"/></svg><span>暗梁<span class="ltn">(A)</span></span></div>
                    <div class="tnode tchild tlast"><i></i><svg class="ic"><use href="#t-mrebar"/></svg><span>砌体加筋<span class="ltn">(Y)</span></span></div>
                    <div class="tnode tgroup"><svg class="tarrow" width="11" height="8" viewBox="0 0 11 8"><path d="M1 1l4.500 4.500L10 1" fill="none" stroke="#444" stroke-width="1.500"/></svg><i></i><svg class="ic"><use href="#folder"/></svg><span>门窗洞</span></div>
                    <div class="tnode tchild"><i></i><svg class="ic"><use href="#t-door"/></svg><span>门<span class="ltn">(M)</span></span></div>
                    <div class="tnode tchild"><i></i><svg class="ic"><use href="#t-win"/></svg><span>窗<span class="ltn">(C)</span></span></div>
                    <div class="tnode tchild"><i></i><svg class="ic"><use href="#t-dw"/></svg><span>门联窗<span class="ltn">(A)</span></span></div>
                    <div class="tnode tchild"><i></i><svg class="ic"><use href="#t-whole"/></svg><span>墙洞<span class="ltn">(D)</span></span></div>
                    <div class="tnode tchild"><i></i><svg class="ic"><use href="#t-frame"/></svg><span>壁龛<span class="ltn">(I)</span></span></div>
                    <div class="tnode tchild"><i></i><svg class="ic"><use href="#t-link"/></svg><span>连梁<span class="ltn">(G)</span></span></div>
                    <div class="tnode tchild"><i></i><svg class="ic"><use href="#t-lint"/></svg><span>过梁<span class="ltn">(G)</span></span></div>
                    <div class="tnode tchild"><i></i><svg class="ic"><use href="#t-bhole"/></svg><span>带形洞</span></div>
                    <div class="tnode tchild tlast"><i></i><svg class="ic"><use href="#t-bwin"/></svg><span>带形窗</span></div>
                    <div class="tnode tgroup"><svg class="tarrow" width="11" height="8" viewBox="0 0 11 8"><path d="M1 1l4.500 4.500L10 1" fill="none" stroke="#444" stroke-width="1.500"/></svg><i></i><svg class="ic"><use href="#folder"/></svg><span>梁</span></div>
                    <div class="tnode tchild"><i></i><svg class="ic"><use href="#t-beam"/></svg><span>梁<span class="ltn">(L)</span></span></div>
                    <div class="tnode tchild tlast"><i></i><svg class="ic"><use href="#t-ring"/></svg><span>圈梁<span class="ltn">(E)</span></span></div>
                    <div class="tnode tgroup"><svg class="tarrow" width="11" height="8" viewBox="0 0 11 8"><path d="M1 1l4.500 4.500L10 1" fill="none" stroke="#444" stroke-width="1.500"/></svg><i></i><svg class="ic"><use href="#folder"/></svg><span>板</span></div>
                    <div class="tnode tchild"><i></i><svg class="ic"><use href="#t-slab"/></svg><span>现浇板<span class="ltn">(B)</span></span></div>
                    <div class="tnode tchild"><i></i><svg class="ic"><use href="#t-spiral"/></svg><span>螺旋板<span class="ltn">(B)</span></span></div>
                    <div class="tnode tchild"><i></i><svg class="ic"><use href="#t-cap"/></svg><span>柱帽<span class="ltn">(V)</span></span></div>
                    <div class="tnode tchild"><i></i><svg class="ic"><use href="#t-shole"/></svg><span>板洞<span class="ltn">(N)</span></span></div>
                    <div class="tnode tchild"><i></i><svg class="ic"><use href="#t-srebar"/></svg><span>板受力筋<span class="ltn">(S)</span></span></div>
                    <div class="tnode tchild sel"><i></i><svg class="ic"><use href="#t-neg"/></svg><span>板负筋<span class="ltn">(F)</span></span></div>
                    <div class="tnode tchild tlast"><i></i><svg class="ic"><use href="#t-band"/></svg><span>楼层板带<span class="ltn">(H)</span></span></div>
                    <div class="tnode tgroup"><svg class="tarrow" width="11" height="8" viewBox="0 0 11 8"><path d="M1 1l4.500 4.500L10 1" fill="none" stroke="#444" stroke-width="1.500"/></svg><i></i><svg class="ic"><use href="#folder"/></svg><span>基础</span></div>
                    <div class="tnode tchild"><i></i><svg class="ic"><use href="#t-fbeam"/></svg><span>基础梁<span class="ltn">(F)</span></span></div>
                    <div class="tnode tchild"><i></i><svg class="ic"><use href="#t-raft"/></svg><span>筏板基础<span class="ltn">(M)</span></span></div>
                </div>
                <div class="vscroll tree-scroll">
                    <svg class="up-a" width="9" height="6" viewBox="0 0 9 6"><path d="M1 5l3.500-3.500L8 5" fill="none" stroke="#555" stroke-width="1.500"/></svg>
                    <div class="thumb"></div>
                    <svg class="down-a" width="9" height="6" viewBox="0 0 9 6"><path d="M1 1l3.500 3.500L8 1" fill="none" stroke="#555" stroke-width="1.500"/></svg>
                </div>
            </div>
        </div>
        <button class="btn pane-btn">单构件输入</button>
        <button class="btn pane-btn">报表预览</button>
    </aside>

    <div class="work d-flex flex-column">
        <!-- edit tools -->
        <div class="tbar tb-2">
            <div class="seg seg-2">
                <span class="grip"></span>
                <span class="ti m-0"><svg class="ic"><use href="#erase"/></svg>删除</span><span class="vsep"></span>
                <span class="ti"><svg class="ic"><use href="#copy"/></svg>复制</span>
                <span class="ti m-0"><svg class="ic"><use href="#mirror"/></svg>镜像</span><span class="vsep"></span>
                <span class="ti"><svg class="ic"><use href="#move"/></svg>移动</span>
                <span class="ti m-0"><svg class="ic"><use href="#rot"/></svg>旋转</span><span class="vsep x1"></span>
                <span class="ti off"><svg class="ic"><use href="#extd"/></svg>延伸</span>
                <span class="ti off m-0"><svg class="ic"><use href="#trim"/></svg>修剪</span><span class="vsep"></span>
                <span class="ti off"><svg class="ic"><use href="#brk"/></svg>打断</span>
                <span class="ti off"><svg class="ic"><use href="#merge"/></svg>合并</span>
                <span class="ti off m-0"><svg class="ic"><use href="#split"/></svg>分割</span><span class="vsep x2"></span>
                <span class="ti off"><svg class="ic"><use href="#align"/></svg>对齐<b class="car tight dim"></b></span>
                <span class="ti"><svg class="ic"><use href="#off"/></svg>偏移</span>
                <span class="ti m-0"><svg class="ic"><use href="#strch"/></svg>拉伸</span><span class="vsep"></span>
                <span class="ti off"><svg class="ic"><use href="#grip"/></svg>设置夹点</span>
            </div>
        </div>

        <!-- component pickers -->
        <div class="tbar tb-3">
            <div class="seg seg-3a">
                <div class="cmb lay">基础层<b class="car m-0"></b></div>
                <div class="cmb">板<b class="car m-0"></b></div>
                <div class="cmb">板负筋<b class="car m-0"></b></div>
                <div class="cmb">FJ-1<b class="car m-0"></b></div>
                <div class="cmb me-0">分层板1<b class="car m-0"></b></div>
                <span class="vsep ms-2"></span>
                <span class="ti me-1"><svg class="ic"><use href="#attr"/></svg>属性</span>
                <span class="ti on px-1"><svg class="ic"><use href="#edit"/></svg>编辑钢筋</span>
                <span class="ti ms-1"><svg class="ic"><use href="#list"/></svg>构件列表</span>
                <span class="ti"><svg class="ic"><use href="#pick"/></svg>拾取构件</span>
            </div>
            <div class="seg seg-3b">
                <span class="grip"></span>
                <span class="ti"><svg class="ic"><use href="#twop"/></svg>两点</span>
                <span class="ti"><svg class="ic"><use href="#para"/></svg>平行</span>
                <span class="ti"><svg class="ic"><use href="#angl"/></svg>点角<b class="car"></b></span>
                <span class="ti"><svg class="ic"><use href="#arc3"/></svg>三点辅轴<b class="car"></b></span>
                <span class="ti"><svg class="ic"><use href="#delx"/></svg>删除辅轴</span>
                <span class="ti m-0"><svg class="ic"><use href="#dim"/></svg>尺寸标注<b class="car"></b></span>
            </div>
        </div>

        <!-- draw tools -->
        <div class="tbar tb-4">
            <div class="seg seg-4a">
                <span class="grip near"></span>
                <span class="ti on ps-1 pe-1 m-0"><svg class="ic"><use href="#cursor"/></svg>选择</span><b class="car near"></b>
                <span class="vsep x1"></span>
                <span class="ti off"><svg class="ic"><use href="#line"/></svg>直线</span>
                <span class="ti off me-1"><svg class="ic"><use href="#arc"/></svg>三点画弧<b class="car dim"></b></span>
                <div class="cmb box"><b class="car dim m-0"></b></div>
                <span class="vsep nar"></span>
                <span class="ti"><svg class="ic"><use href="#blay"/></svg>按梁布置<b class="car"></b></span>
                <span class="ti"><svg class="ic"><use href="#wlay"/></svg>按墙布置</span>
                <span class="ti"><svg class="ic"><use href="#elay"/></svg>按板边布置</span>
                <span class="ti m-0"><svg class="ic"><use href="#llay"/></svg>画线布置</span>
                <span class="vsep"></span>
                <span class="ti"><svg class="ic"><use href="#swap"/></svg>交换左右标注</span>
                <span class="ti"><svg class="ic"><use href="#view"/></svg>查看布筋<b class="car tight"></b></span>
                <span class="ti"><svg class="ic"><use href="#abc"/></svg>查改标注</span>
                <span class="ti"><svg class="ic"><use href="#auto"/></svg>自动生成负筋</span>
            </div>
            <span class="grip near"></span>
            <div class="blank-cell"></div>
        </div>

        <!-- drawing canvas: free canvas, drawn in screen coordinates -->
        <div class="canvas-area">
            <svg width="1095" height="305" viewBox="271 168 1095 305">
                <rect x="271" y="168" width="1095" height="305" fill="#000"/>
                <rect x="463" y="168" width="92" height="305" fill="#00ee00"/>
                <rect x="555" y="168" width="811" height="305" fill="url(#hatch)"/>
                <g shape-rendering="crispEdges">
                    <path d="M510.500 168V473" stroke="#fff"/>
                    <path d="M509.500 168V473" stroke="#ff1a1a"/>
                    <path d="M577.500 168V473M1354.500 168V473" stroke="#a80000"/>
                    <path d="M556 345.500H1090M1058.500 236V377" stroke="#fff" stroke-dasharray="15 1"/>
                    <path d="M555.500 195V377M523 345.500h32" stroke="#ff00ff"/>
                    <path d="M510 195.500H1059" stroke="#0a80ff" stroke-width="2"/>
                    <path d="M510.500 195V236" stroke="#0a80ff" stroke-width="2"/>
                    <path d="M1059.500 195V236" stroke="#0a80ff" stroke-width="1"/>
                    <path d="M1058.500 195V236" stroke="#e08a1a" stroke-width="1"/>
                </g>
                <circle cx="509" cy="181" r="12" fill="none" stroke="#0a7f0a"/>
                <path d="M555 345L532 368" stroke="#ff00ff"/>
                <path d="M555 345L577 322M1035 368L1079 323" stroke="#fff"/>
                <path d="M326 422V384" stroke="#00ee00" stroke-width="4"/>
                <path d="M326 374l4.500 11h-9z" fill="#00ee00"/>
                <path d="M326 423.500h38" stroke="#f00" stroke-width="4"/>
                <path d="M375 423.500l-12-4.500v9z" fill="#f00"/>
                <text x="335" y="386" font-size="12" fill="#00ee00" font-family="Liberation Sans">Y</text>
                <text x="363" y="412" font-size="13" fill="#f00" font-family="Liberation Sans">X</text>
                <text x="379" y="458" font-size="64" fill="#fff" font-family="Liberation Sans">0</text>
                <text x="695" y="458" font-size="64" fill="#fff" font-family="Liberation Sans" textLength="133" lengthAdjust="spacingAndGlyphs">1200</text>
            </svg>
        </div>

        <!-- snap tools -->
        <div class="tbar tb-5">
            <div class="seg seg-5a">
                <span class="grip near2"></span>
                <span class="ti w5"><svg class="ic"><use href="#orth"/></svg>正交</span>
                <span class="ti on snap-on"><svg class="ic"><use href="#snap"/></svg>对象捕捉</span>
                <span class="ti on snap-on"><svg class="ic"><use href="#dyn"/></svg>动态输入</span>
            </div>
            <div class="seg seg-5b">
                <span class="grip"></span>
                <span class="ti me-1"><svg class="ic"><use href="#cross"/></svg>交点</span>
                <span class="ti on snap-on"><svg class="ic"><use href="#perp"/></svg>垂点</span>
                <span class="ti on snap-on"><svg class="ic"><use href="#mid"/></svg>中点</span>
                <span class="ti l2"><svg class="ic"><use href="#vtx"/></svg>顶点</span>
                <span class="ti m-0"><svg class="ic"><use href="#coord"/></svg>坐标</span>
            </div>
            <div class="seg seg-5c">
                <span class="grip near3"></span>
                <div class="cmb offset m-0">不偏移<b class="car m-0"></b></div>
                <span class="vsep sep-x"></span>
                <span class="gray-t lbl-x">X=</span>
                <div class="spin">0<b><i class="car up"></i><i class="car down"></i></b></div>
                <span class="gray-t lbl-m">mm</span>
                <span class="gray-t lbl-y">Y=</span>
                <div class="spin">0<b><i class="car up"></i><i class="car down"></i></b></div>
                <span class="gray-t lbl-m">mm</span>
                <span class="vsep sep-5"></span>
                <span class="chk"></span>
                <span class="rot-l">旋转</span>
                <div class="spin wide">0.000<b class="ms-1"><i class="car up"></i><i class="car down"></i></b></div>
                <span class="ms-1 gray-t">°</span>
            </div>
        </div>

        <!-- single component rebar dock -->
        <div class="dock d-flex">
            <div class="dock-strip d-flex flex-column">
                <svg width="11" height="12"><use href="#panel-x"/></svg>
                <div class="dots"></div>
            </div>
            <div class="dock-body d-flex flex-column">
                <div class="tbar tb-6">
                    <span class="ti w9"><svg class="ic"><use href="#first"/></svg></span>
                    <span class="ti"><svg class="ic"><use href="#prev"/></svg></span>
                    <span class="ti w9"><svg class="ic"><use href="#next"/></svg></span>
                    <span class="ti w0"><svg class="ic"><use href="#last"/></svg></span>
                    <span class="vsep sep-a"></span>
                    <span class="ti"><svg class="ic"><use href="#upb"/></svg></span>
                    <span class="ti w0"><svg class="ic"><use href="#dnb"/></svg></span>
                    <span class="vsep sep-c"></span>
                    <span class="ti off"><svg class="ic"><use href="#ins"/></svg>插入</span>
                    <span class="ti off"><svg class="ic"><use href="#dele"/></svg>删除</span>
                    <span class="ti w9"><svg class="ic"><use href="#scale"/></svg>缩尺配筋</span>
                    <span class="ti"><svg class="ic"><use href="#info"/></svg>钢筋信息</span>
                    <span class="ti w9"><svg class="ic"><use href="#lib"/></svg>钢筋图库</span>
                    <span class="ti w9"><svg class="ic"><use href="#other"/></svg>其他<b class="car tight"></b></span>
                    <span>关闭</span>
                    <span class="vsep sep-c"></span>
                    <span>单构件钢筋总重(kg)：16.603</span>
                </div>
                <div class="grid-frame">
                    <div class="d-flex">
                        <div class="grid-wrap">
                            <table class="table table-bordered rebar">
                                <colgroup><col class="c0"><col class="c1"><col class="c2"><col class="c3"><col class="c4"><col class="c5"><col class="c6"><col class="c7"><col class="c8"><col class="c9"><col class="c10"><col class="c11"><col class="c12"><col class="c13"></colgroup>
                                <thead>
                                    <tr><th></th><th>筋号</th><th>直径<span class="ltn">(mm)</span></th><th>级别</th><th>图号</th><th class="pick">图形</th><th>计算公式</th><th>公式描述</th><th>长度<span class="ltn">(mm)</span></th><th>根数</th><th>搭接</th><th>损耗<span class="ltn">(%)</span></th><th>单重<span class="ltn">(kg)</span></th><th>总重<span class="ltn">(kg)</span></th></tr>
                                </thead>
                                <tbody>
                                    <tr>
                                        <th class="cur">1*</th><td class="bar">板负筋<span class="ltn">.1</span></td><td class="ltn">12</td><td class="ctr">虫</td><td class="ltn">64</td>
                                        <td class="pic cur"><svg width="200" height="33" viewBox="0 0 200 33"><text x="25" y="20" font-size="11" font-family="Liberation Sans" fill="#111">90</text><path d="M40.500 9v14h119V9" fill="none" stroke="#000" stroke-width="2"/><text x="100" y="20" font-size="11" text-anchor="middle" font-family="Liberation Sans" fill="#f00">1200</text><text x="161" y="20" font-size="11" font-family="Liberation Sans" fill="#111">90</text></svg></td>
                                        <td class="ltn">1200+90+90</td><td>左净长+弯折+弯折</td><td class="ltn">1380</td><td class="ltn">10</td><td class="ltn">0</td><td class="ltn">0</td><td class="ltn">1.225</td><td class="ltn">12.254</td>
                                    </tr>
                                    <tr>
                                        <th>2</th><td class="bar">板负筋<span class="ltn">.2</span></td><td class="ltn">12</td><td class="ctr">虫</td><td class="ltn">64</td>
                                        <td class="pic"><svg width="200" height="33" viewBox="0 0 200 33"><text x="25" y="20" font-size="11" font-family="Liberation Sans" fill="#111">90</text><path d="M40.500 9v14h119V9" fill="none" stroke="#000" stroke-width="2"/><text x="100" y="20" font-size="11" text-anchor="middle" font-family="Liberation Sans" fill="#f00">227</text><text x="161" y="20" font-size="11" font-family="Liberation Sans" fill="#111">90</text></svg></td>
                                        <td class="ltn">242+90-15+120-2*15</td><td class="tight">左净长+弯折-保护层+设定弯<br>折</td><td class="ltn">407</td><td class="ltn">2</td><td class="ltn">0</td><td class="ltn">0</td><td class="ltn">0.361</td><td class="ltn">0.723</td>
                                    </tr>
                                    <tr>
                                        <th>3</th><td class="bar">板负筋<span class="ltn">.3</span></td><td class="ltn">12</td><td class="ctr">虫</td><td class="ltn">64</td>
                                        <td class="pic"><svg width="200" height="33" viewBox="0 0 200 33"><text x="25" y="20" font-size="11" font-family="Liberation Sans" fill="#111">90</text><path d="M40.500 9v14h119V9" fill="none" stroke="#000" stroke-width="2"/><text x="100" y="20" font-size="11" text-anchor="middle" font-family="Liberation Sans" fill="#f00">443</text><text x="161" y="20" font-size="11" font-family="Liberation Sans" fill="#111">90</text></svg></td>
                                        <td class="ltn">458-15+120-2*15+90</td><td class="tight">左净长-保护层+设定弯折+弯<br>折</td><td class="ltn">623</td><td class="ltn">2</td><td class="ltn">0</td><td class="ltn">0</td><td class="ltn">0.553</td><td class="ltn">1.106</td>
                                    </tr>
                                    <tr class="low">
                                        <th>4</th><td class="bar">分布筋<span class="ltn">.1</span></td><td class="ltn">6</td><td class="ctr">中</td><td class="ltn">1</td>
                                        <td class="pic"><svg width="200" height="28" viewBox="0 0 200 28"><text x="101" y="17" font-size="11" text-anchor="middle" font-family="Liberation Sans" fill="#f00">2150</text><path d="M23 20h150" stroke="#000" stroke-width="2"/></svg></td>
                                        <td class="ltn">2400-125-125</td><td>净长-起步-起步</td><td class="ltn">2150</td><td class="ltn">3</td><td class="ltn">0</td><td class="ltn">0</td><td class="ltn">0.559</td><td class="ltn">1.677</td>
                                    </tr>
                                    <tr><th></th><td class="bar"></td><td></td><td></td><td></td><td class="pic"></td><td></td><td></td><td></td><td></td><td></td><td></td><td></td><td></td></tr>
                                </tbody>
                            </table>
                        </div>
                        <div class="vscroll grid-scroll">
                            <svg class="up-a" width="9" height="6" viewBox="0 0 9 6"><path d="M1 5l3.500-3.500L8 5" fill="none" stroke="#555" stroke-width="1.500"/></svg>
                            <div class="thumb"></div>
                            <svg class="down-a" width="9" height="6" viewBox="0 0 9 6"><path d="M1 1l3.500 3.500L8 1" fill="none" stroke="#555" stroke-width="1.500"/></svg>
                        </div>
                    </div>
                    <div class="hscroll">
                        <svg class="ms-1" width="7" height="9" viewBox="0 0 7 9"><path d="M6 1L2 4.500 6 8" fill="none" stroke="#555" stroke-width="1.500"/></svg>
                        <div class="thumb"></div>
                        <svg class="hs-right end-0 me-4" width="7" height="9" viewBox="0 0 7 9"><path d="M1 1l4 3.500L1 8" fill="none" stroke="#555" stroke-width="1.500"/></svg>
                    </div>
                </div>
            </div>
        </div>
    </div>
</div>

<!-- status bar -->
<div class="status-bar d-flex">
    <div class="s1"><span class="ltn">X=1452 Y=12332</span></div>
    <div class="s2">层高<span class="ltn">:3.47m</span></div>
    <div class="s3">底标高<span class="ltn">:-3.5m</span></div>
    <div class="s4"><span class="ltn">1(1)</span></div>
    <div class="s5">按鼠标左键指定第一个角点，或拾取构件图元</div>
    <div class="s6"><span class="ltn">515.3 FPS</span></div>
</div>

<!-- windows taskbar -->
<footer class="task-bar d-flex">
    <div class="start"><svg width="16" height="16" viewBox="0 0 16 16"><path d="M0 2.200l6.500-1v6.300H0zM7.500 1L16 0v7.500H7.500zM0 8.500h6.500v6.300l-6.500-1zM7.500 8.500H16V16l-8.500-1z" fill="#fff"/></svg></div>
    <div class="search">
        <span class="ring"></span><span>在这里输入你要搜索的内容</span>
        <svg class="ms-auto me-3" width="11" height="18" viewBox="0 0 11 18"><rect x="3" y="1" width="5" height="10" rx="2.500" fill="none" stroke="#aaa"/><path d="M1 7c0 6 9 6 9 0M5.500 12v4M2 16.500h7" fill="none" stroke="#aaa"/></svg>
    </div>
    <div class="tslot"><svg width="22" height="22" viewBox="0 0 22 22"><path d="M11 11C5 11 2 9 2 5s5-4 7-2 2 5 2 8zM11 11c0-6 2-9 6-9s4 5 2 7-5 2-8 2zM11 11c6 0 9 2 9 6s-5 4-7 2-2-5-2-8zM11 11c0 6-2 9-6 9s-4-5-2-7 5-2 8-2z" fill="#e6e6e6"/></svg></div>
    <div class="tslot"><svg width="20" height="20" viewBox="0 0 20 20"><path d="M16 4A8 8 0 1 0 18 11H12M14 7a5 5 0 1 0 1 4" fill="none" stroke="#ccc" stroke-width="1.400"/></svg></div>
    <div class="tsep"><svg width="2" height="20"><path d="M1 0v20" stroke="#333"/></svg></div>
    <div class="tslot"><svg width="22" height="22" viewBox="0 0 22 22"><path d="M2 12C2 5 7 1 12 1c6 0 9 4 9 10v2H7c1 5 8 5 12 2v5c-7 3-17 1-17-8zm5-3h8c0-4-7-4-8 0z" fill="#0a78d7"/></svg></div>
    <div class="tslot"><svg width="22" height="24" viewBox="0 0 22 24"><path d="M1 7h20v16H1z" fill="#fff"/><path d="M7 7c0-8 8-8 8 0" fill="none" stroke="#fff"/><path d="M6 11h4v4H6zM11 11h4v4h-4zM6 16h4v4H6zM11 16h4v4h-4z" fill="#111"/></svg></div>
    <div class="tslot"><svg width="22" height="22" viewBox="0 0 22 22"><path d="M0 2h9l2 2h11v17H0z" fill="#f7d774"/><path d="M0 8h22v13H0z" fill="#fbe49c"/><path d="M5 12h12v9h-4v-4H9v4H5z" fill="#39a9e8"/></svg></div>
    <div class="tslot run"><svg width="22" height="24" viewBox="0 0 22 24"><path d="M18 5A9.500 9.500 0 1 0 20 14H11" fill="none" stroke="#1b8ae8" stroke-width="4"/></svg></div>
    <div class="tslot run"><svg width="22" height="24" viewBox="0 0 22 24"><circle cx="11" cy="13" r="10" fill="#7cc63a"/><circle cx="11" cy="13" r="6" fill="#fff"/><path d="M6 13h10M7 10h8M7 16h8" stroke="#4f9f1f" stroke-width="1.500"/></svg></div>
    <div class="tslot run act"><svg width="24" height="24" viewBox="0 0 24 24"><rect width="24" height="24" rx="4" fill="#1e90f0"/><path d="M12 5v14M6 9v4h12V9" stroke="#fff" stroke-width="2" fill="none"/></svg></div>
    <div class="tslot run"><svg width="24" height="25" viewBox="0 0 24 25"><rect y="1" width="24" height="24" rx="2" fill="#f0a820"/><path d="M4 5h14v16H4z" fill="#fff3d6"/><path d="M6 9h8M6 12h8M6 15h5" stroke="#888"/><path d="M22 1l-9 13-1 3 3-2 9-12z" fill="#c0392b"/></svg></div>
    <div class="tray">
        <div class="tray-txt tray-cpu">28%<br>CPU使用</div>
        <svg class="mr-10" width="12" height="8" viewBox="0 0 12 8"><path d="M1 7l5-5 5 5" fill="none" stroke="#fff" stroke-width="1.300"/></svg>
        <svg class="mr-12" width="16" height="14" viewBox="0 0 16 14"><path d="M1 4h2v4h2V2M3 4V0" stroke="#fff" fill="none"/><path d="M5 5h10v7H5z" fill="#fff"/></svg>
        <svg class="mr-8" width="14" height="14" viewBox="0 0 14 14"><path d="M1 13a12 12 0 0 1 12-12M4 13a9 9 0 0 1 9-9M7 13a6 6 0 0 1 6-6" fill="none" stroke="#ccc" stroke-dasharray="2 1"/></svg>
        <svg class="mr-8" width="15" height="14" viewBox="0 0 15 14"><path d="M1 5h3l4-4v12L4 9H1z" fill="none" stroke="#fff"/><path d="M10 4c1 2 1 4 0 6M12 2c2 3 2 7 0 10" fill="none" stroke="#ccc"/></svg>
        <svg class="mr-9" width="24" height="15" viewBox="0 0 24 15"><path d="M.500.500h23v14H.500z" fill="none" stroke="#fff"/><path d="M3 4h18M3 7h18" stroke="#fff" stroke-dasharray="2 1"/><path d="M6 11h12" stroke="#fff"/></svg>
        <span class="mr-14 tray-ime">中</span>
        <svg class="mr-20" width="16" height="18" viewBox="0 0 16 18"><path d="M3 1h12l1 14-13 2-3-6z" fill="#e8481c"/><path d="M12 5H6v3h5v3H5" fill="none" stroke="#fff" stroke-width="2"/></svg>
        <div class="tray-txt tray-date">15:11<br>2017/9/4</div>
        <div class="position-relative">
            <svg width="16" height="18" viewBox="0 0 16 18"><path d="M0 0h16v13H6l-3 4v-4H0z" fill="#fff"/><path d="M3 4h10M3 7h10M3 10h6" stroke="#0b1014"/></svg>
            <span class="position-absolute badge rounded-circle p-0 tray-badge">2</span>
        </div>
    </div>
</footer>

<!-- floating net monitor -->
<div class="net-wid">
    <div class="net-pill"></div>
    <svg class="net-arrows" width="8" height="28" viewBox="0 0 8 28"><path d="M4 0l4 4H5.500v4h-3V4H0z" fill="#e8503a"/><path d="M4 28l4-4H5.500v-5h-3v5H0z" fill="#2fa84a"/></svg>
    <div class="net-rate rate-up">0K/s</div>
    <div class="net-rate rate-down">0K/s</div>
    <div class="net-plus">+</div>
    <div class="net-dot"></div>
    <div class="net-ball">66%</div>
</div>

</body>
</html>
